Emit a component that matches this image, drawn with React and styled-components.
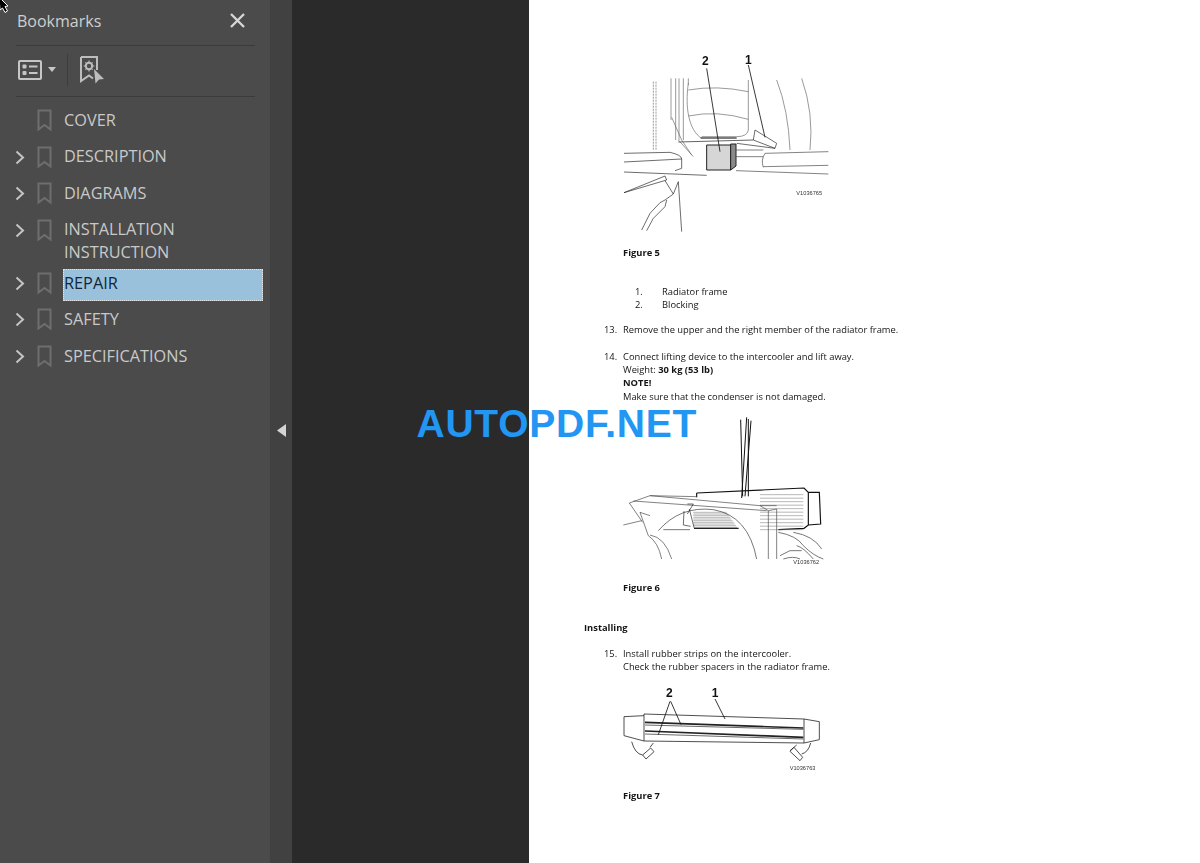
import React from "react";
import styled, { createGlobalStyle } from "styled-components";

const Global = createGlobalStyle`
  html, body { margin: 0; padding: 0; height: 100%; overflow: hidden; background: #2a2a2a; }
  #root { height: 100%; }
  * { box-sizing: border-box; }
`;

const Shell = styled.div`
  position: relative;
  display: flex;
  width: 100%;
  height: 100vh;
  overflow: hidden;
  font-family: "Open Sans", "Noto Sans", sans-serif;
`;
const Sidebar = styled.aside`
  flex: 0 0 270px;
  background: #4b4b4b;
  display: flex;
  flex-direction: column;
`;
const PanelHeader = styled.header`
  height: 46px;
  margin: 0 15px 0 16px;
  padding: 0 0 4px 1px;
  display: flex;
  align-items: center;
  justify-content: space-between;
  border-bottom: 1px solid #3b3b3b;
`;
const PanelTitle = styled.h2`
  margin: 0;
  font-size: 16px;
  font-weight: 400;
  color: #cfcfcf;
`;
const CloseBtn = styled.span`
  display: flex;
  margin-right: 10px;
  color: #d6d6d6;
`;
const Toolbar = styled.div`
  height: 51px;
  margin: 0 15px 0 16px;
  padding-bottom: 3px;
  display: flex;
  align-items: center;
  border-bottom: 1px solid #3b3b3b;
`;
const ToolGroup = styled.span`
  display: flex;
  align-items: center;
  gap: 6px;
  padding-left: 2px;
  width: 51px;
  color: #c6c6c6;
`;
const ToolSep = styled.span`
  width: 1px;
  height: 32px;
  background: #3d3d3d;
`;
const ToolIcon = styled.span`
  display: flex;
  margin-left: 12px;
  color: #bdbdbd;
`;
const Tree = styled.ul`
  list-style: none;
  margin: 9px 7px 0 0;
  padding: 0;
  display: flex;
  flex-direction: column;
  gap: 4.5px;
`;
const Row = styled.li`
  display: flex;
  align-items: flex-start;
`;
const Caret = styled.span`
  flex: 0 0 37px;
  height: 29px;
  padding-left: 15px;
  display: flex;
  align-items: center;
  color: #c4c4c4;
`;
const Mark = styled.span`
  flex: 0 0 26px;
  height: 29px;
  display: flex;
  align-items: center;
  color: #6e6e6e;
`;
const Label = styled.span`
  flex: 1;
  min-height: 32px;
  padding: 2.6px 0 0.4px 1px;
  font-size: 16.3px;
  line-height: 23px;
  color: ${p => (p.$selected ? "#10263c" : "#c9c9c9")};
  background: ${p => (p.$selected ? "#99c1dc" : "transparent")};
  outline: ${p => (p.$selected ? "1px dotted #e4e4e4" : "none")};
  outline-offset: -1px;
`;
const Handle = styled.div`
  flex: 0 0 22px;
  background: #414141;
  display: flex;
  align-items: center;
  justify-content: center;
  padding-bottom: 2px;
  color: #d4d4d4;
`;
const Gutter = styled.div`
  flex: 0 0 237px;
  background: #2a2a2a;
`;
const Sheet = styled.main`
  flex: 1;
  background: #fff;
  padding: 50px 0 0 55px;
  font-size: 9.35px;
  line-height: 13.4px;
  color: #151515;
  filter: blur(0.3px);
`;
const Figure = styled.svg`
  display: block;
  margin-left: ${p => p.$left}px;
`;
const Caption = styled.div`
  margin: ${p => p.$top}px 0 0 39px;
  font-weight: 700;
`;
const Legend = styled.ol`
  list-style: none;
  margin: 26px 0 11.5px 51px;
  padding: 0;
`;
const LegendItem = styled.li`
  display: grid;
  grid-template-columns: 27px 1fr;
`;
const Step = styled.div`
  display: grid;
  grid-template-columns: 19px 1fr;
  padding-left: 20px;
  margin-bottom: ${p => p.$after || 0}px;
`;
const Lines = styled.div`
  display: flex;
  flex-direction: column;
`;
const Heavy = styled.b`
  font-weight: 700;
`;
const SectionHead = styled.div`
  margin: 26.5px 0 12.5px;
  font-weight: 700;
`;
const Watermark = styled.div`
  position: absolute;
  left: 416.5px;
  top: 401px;
  font-family: "Liberation Sans", Arial, sans-serif;
  font-weight: 700;
  font-size: 39px;
  line-height: 46px;
  letter-spacing: 0.75px;
  color: #2196f3;
`;
const Pointer = styled.svg`
  position: absolute;
  left: 0;
  top: 0;
`;

const Chevron = () => (
  <svg width="10" height="15" viewBox="0 0 10 15" fill="none" stroke="currentColor" strokeWidth="2">
    <path d="M1.5 1.5 L8 7.5 L1.5 13.5" />
  </svg>
);
const Ribbon = () => (
  <svg width="15" height="23" viewBox="0 0 15 23" fill="none" stroke="currentColor" strokeWidth="2">
    <path d="M1.5 1.5 H13.5 V20.5 L7.5 16 L1.5 20.5 Z" />
  </svg>
);
const ListIcon = () => (
  <svg width="24" height="20" viewBox="0 0 24 20" fill="none" stroke="currentColor" strokeWidth="2">
    <rect x="1" y="1" width="22" height="18" rx="1" />
    <rect x="4.5" y="4.5" width="4" height="4" rx="1" fill="currentColor" stroke="none" />
    <rect x="4.5" y="11" width="4" height="4" rx="1" fill="currentColor" stroke="none" />
    <path d="M11 6.5 H19.5 M11 13 H19.5" />
  </svg>
);
const Drop = () => (
  <svg width="8" height="5" viewBox="0 0 8 5" fill="currentColor"><path d="M0 0 H8 L4 5 Z" /></svg>
);
const BookmarkGear = () => (
  <svg width="25" height="28" viewBox="0 0 25 28" fill="none" stroke="currentColor" strokeWidth="2">
    <path d="M1 1 H17 V14 M1 1 V25 L9 19.5 L13 22.5" />
    <circle cx="9" cy="10" r="3.2" />
    <path d="M9 4.6 V6 M9 14 V15.4 M3.6 10 H5 M13 10 H14.4 M5.4 6.4 L6.2 7.2 M11.8 12.8 L12.6 13.6 M5.4 13.6 L6.2 12.8 M11.8 7.2 L12.6 6.4" strokeWidth="1.1" />
    <path d="M14 13 L24 23 L19 23.5 L15.5 27.5 Z" fill="currentColor" stroke="none" />
  </svg>
);

const items = [
  ["COVER", false],
  ["DESCRIPTION", true],
  ["DIAGRAMS", true],
  ["INSTALLATION INSTRUCTION", true],
  ["REPAIR", true, true],
  ["SAFETY", true],
  ["SPECIFICATIONS", true],
];

const FigOne = () => (
  <Figure $left={26} width="240" height="190" viewBox="0 30 720 570" fill="none" stroke="#222" strokeWidth="2">
    <g stroke="#666">
      <path d="M130 125 V330 M138 125 V330" strokeDasharray="6 3" />
      <path d="M183 115 V240 M197 115 V300 M207 115 V300 M220 115 V300 M235 115 V135" />
      <path d="M235 150 Q320 135 415 155 M235 228 Q320 210 415 238" />
      <path d="M235 130 C225 200 235 270 275 295 M415 120 V270 Q412 290 380 290 H275" />
      <path d="M500 120 Q535 210 540 330 M575 115 Q612 220 600 330" />
      <path d="M185 232 L215 300 L245 345 M205 300 L250 350" />
    </g>
    <path d="M205 306 L430 300" strokeWidth="2.5" stroke="#444" />
    <path d="M272 294 H380" strokeWidth="4" stroke="#555" />
    <path d="M435 270 L500 310 L495 325 L380 310 M435 270 L430 300 L495 325" />
    <path d="M290 315 H362 V390 H290 Z" fill="#d6d6d6" strokeWidth="3" />
    <path d="M362 312 L378 312 V378 L362 390 Z" fill="#8a8a8a" strokeWidth="3" />
    <path d="M42 340 L180 337 Q215 345 215 357 L42 366 M215 357 V385 L195 392 M42 396 L290 406" />
    <path d="M465 340 L655 335 M460 380 L655 376 M465 340 Q452 360 460 382 M378 392 L655 402 M378 330 H460 M378 350 H460" stroke="#444" />
    <path d="M42 458 L165 408 L170 420 Z M205 425 L215 575 M165 422 L190 462 L205 425 M150 488 L120 520 L95 570 M165 500 L130 535 L110 572 M150 488 L165 480 L190 462 M165 500 L170 480" />
    <path d="M290 85 L330 335 M415 75 L465 292" stroke="#111" strokeWidth="2.5" />
    <text x="276" y="76" fontFamily="Liberation Sans" fontSize="36" fontWeight="700" fill="#111" stroke="none">2</text>
    <text x="405" y="72" fontFamily="Liberation Sans" fontSize="36" fontWeight="700" fill="#111" stroke="none">1</text>
    <text x="559" y="464" fontFamily="Liberation Sans" fontSize="17" fill="#333" stroke="none">V1036765</text>
  </Figure>
);

const hatch6 = Array.from({ length: 11 }, (_, i) => 275 + i * 10.5);
const hatch6b = Array.from({ length: 10 }, (_, i) => 340 + i * 5);

const FigTwo = () => (
  <Figure $left={16} width="240" height="165" viewBox="0 30 720 495" fill="none" stroke="#222" strokeWidth="2">
    <path d="M422 62 L428 292 M440 55 L425 297 M453 65 L435 292 M445 60 L445 292" stroke="#111" strokeWidth="3" />
    <path d="M290 282 L612 267 L625 280 H658 L662 375 L625 378 L612 388 L535 392 M290 282 V295 M625 280 V378" strokeWidth="3.5" stroke="#111" />
    <g stroke="#777" strokeWidth="1.6">
      {hatch6.map(y => <path key={y} d={`M480 ${y + 12} H610`} />)}
      {hatch6b.map(y => <path key={y} d={`M280 ${y} H${380 + (y - 340) * 0.7}`} />)}
    </g>
    <path d="M88 312 L150 290 L290 293 M100 306 L500 335 M88 312 L128 370 M150 290 L480 320 L505 335 V480 M530 330 V480 M505 335 L530 330 M480 320 L530 320" stroke="#444" />
    <path d="M175 395 Q240 320 340 332 Q445 350 470 480 M190 392 H270" stroke="#333" />
    <path d="M70 378 L125 365 M120 340 L150 350 M145 410 Q175 430 185 480 M150 408 Q195 415 215 480 M120 340 L145 410" stroke="#444" />
    <path d="M268 330 L282 385 M252 336 L250 378 L272 382 M262 315 L280 315 L262 345" stroke="#222" />
    <path d="M282 388 L416 388" strokeWidth="4" stroke="#222" />
    <path d="M535 400 Q590 410 610 440 Q640 470 670 480 M580 400 Q640 410 665 450 M590 440 Q610 445 640 480 M540 470 L570 455 H605 M550 480 Q580 470 600 480" stroke="#333" />
    <text x="580" y="496" fontFamily="Liberation Sans" fontSize="17" fill="#333" stroke="none">V1036762</text>
  </Figure>
);

const FigThree = () => (
  <Figure $left={16} width="240" height="105" viewBox="0 30 720 315" fill="none" stroke="#222" strokeWidth="2.4">
    <path d="M132 135 L612 150 M132 216 L612 222 M132 135 V216 M612 150 V222 M72 143 L132 140 M72 143 V200 L132 216 M612 150 L658 158 V212 L612 222" />
    <path d="M135 160 L610 177 M135 186 L610 205" strokeWidth="5" stroke="#222" />
    <path d="M135 168 L610 181 M135 195 L610 210" stroke="#444" />
    <path d="M210 97 L175 197 M212 97 L243 167 M345 90 L375 150" stroke="#111" strokeWidth="2.5" />
    <path d="M95 218 Q105 255 128 258 M160 222 L150 235 M128 258 L152 237 L162 248 L138 270 Z" />
    <path d="M632 222 Q625 250 605 255 M570 245 L590 228 M570 247 L600 275 L608 265 L582 235 Z" />
    <text x="198" y="84" fontFamily="Liberation Sans" fontSize="36" fontWeight="700" fill="#111" stroke="none">2</text>
    <text x="335" y="84" fontFamily="Liberation Sans" fontSize="36" fontWeight="700" fill="#111" stroke="none">1</text>
    <text x="569" y="304" fontFamily="Liberation Sans" fontSize="17" fill="#333" stroke="none">V1036763</text>
  </Figure>
);

export default function App() {
  return (
    <>
      <Global />
      <Shell>
        <Sidebar>
          <PanelHeader>
            <PanelTitle>Bookmarks</PanelTitle>
            <CloseBtn>
              <svg width="15" height="15" viewBox="0 0 15 15" stroke="currentColor" strokeWidth="2.4">
                <path d="M1 1 L14 14 M14 1 L1 14" />
              </svg>
            </CloseBtn>
          </PanelHeader>
          <Toolbar>
            <ToolGroup><ListIcon /><Drop /></ToolGroup>
            <ToolSep />
            <ToolIcon><BookmarkGear /></ToolIcon>
          </Toolbar>
          <Tree>
            {items.map(([text, hasKids, selected]) => (
              <Row key={text}>
                <Caret>{hasKids && <Chevron />}</Caret>
                <Mark><Ribbon /></Mark>
                <Label $selected={selected}>{text}</Label>
              </Row>
            ))}
          </Tree>
        </Sidebar>
        <Handle>
          <svg width="9" height="13" viewBox="0 0 9 13" fill="currentColor"><path d="M9 0 V13 L0 6.5 Z" /></svg>
        </Handle>
        <Gutter />
        <Sheet>
          <FigOne />
          <Caption $top={5.5}>Figure 5</Caption>
          <Legend>
            <LegendItem><span>1.</span><span>Radiator frame</span></LegendItem>
            <LegendItem><span>2.</span><span>Blocking</span></LegendItem>
          </Legend>
          <Step $after={13}><span>13.</span><span>Remove the upper and the right member of the radiator frame.</span></Step>
          <Step $after={6}>
            <span>14.</span>
            <Lines>
              <span>Connect lifting device to the intercooler and lift away.</span>
              <span>Weight: <Heavy>30 kg (53 lb)</Heavy></span>
              <Heavy>NOTE!</Heavy>
              <span>Make sure that the condenser is not damaged.</span>
            </Lines>
          </Step>
          <FigTwo />
          <Caption $top={7}>Figure 6</Caption>
          <SectionHead>Installing</SectionHead>
          <Step $after={5}>
            <span>15.</span>
            <Lines>
              <span>Install rubber strips on the intercooler.</span>
              <span>Check the rubber spacers in the radiator frame.</span>
            </Lines>
          </Step>
          <FigThree />
          <Caption $top={5}>Figure 7</Caption>
        </Sheet>
        <Watermark>AUTOPDF.NET</Watermark>
        <Pointer width="12" height="14" viewBox="0 0 12 14">
          <path d="M-1 -3 L8 6 L5 6.5 L7.5 11 L5 12.5 L2.5 8 L0 10 Z" fill="#000" stroke="#fff" strokeWidth="1" />
        </Pointer>
      </Shell>
    </>
  );
}
